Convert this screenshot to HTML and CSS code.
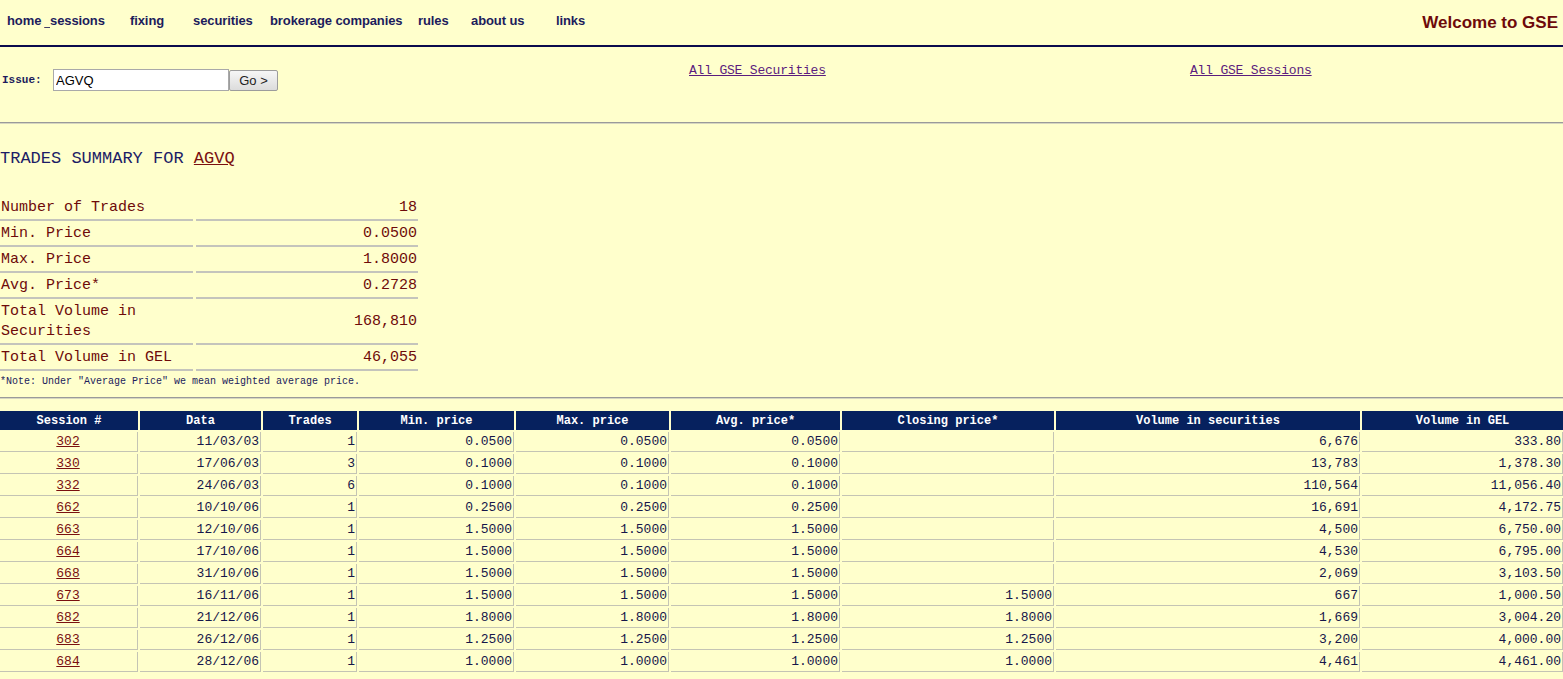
FILE: index.html
```html
<!DOCTYPE html>
<html>
<head>
<meta charset="utf-8">
<title>GSE - Trades summary AGVQ</title>
<link rel="stylesheet" href="styles.css">
</head>
<body>
<header class="topbar">
  <nav class="nav">
    <a class="nav-item" href="#">home<span class="nav-gap">_</span></a>
    <a class="nav-item" href="#">sessions</a>
    <a class="nav-item" href="#">fixing</a>
    <a class="nav-item" href="#">securities</a>
    <a class="nav-item" href="#">brokerage companies</a>
    <a class="nav-item" href="#">rules</a>
    <a class="nav-item" href="#">about us</a>
    <a class="nav-item" href="#">links</a>
  </nav>
  <div class="welcome">Welcome to GSE</div>
</header>

<section class="issue-row">
  <form class="issue-form">
    <label class="issue-label">Issue:</label>
    <input class="issue-input" type="text" value="AGVQ">
    <button class="issue-btn" type="button">Go &gt;</button>
  </form>
  <a class="all-link" href="#">All GSE Securities</a>
  <a class="all-link" href="#">All GSE Sessions</a>
</section>

<hr class="rule rule-top">

<h1 class="title">TRADES SUMMARY FOR <a class="title-link" href="#">AGVQ</a></h1>

<div class="summary">
  <div class="s-label">Number of Trades</div><div class="s-val">18</div>
  <div class="s-label">Min. Price</div><div class="s-val">0.0500</div>
  <div class="s-label">Max. Price</div><div class="s-val">1.8000</div>
  <div class="s-label">Avg. Price*</div><div class="s-val">0.2728</div>
  <div class="s-label">Total Volume in Securities</div><div class="s-val">168,810</div>
  <div class="s-label">Total Volume in GEL</div><div class="s-val">46,055</div>
</div>
<p class="note">*Note: Under "Average Price" we mean weighted average price.</p>

<hr class="rule rule-mid">

<table class="trades">
  <colgroup>
    <col class="c1"><col class="c2"><col class="c3"><col class="c4"><col class="c5"><col class="c6"><col class="c7"><col class="c8"><col class="c9">
  </colgroup>
  <thead>
    <tr><th>Session #</th><th>Data</th><th>Trades</th><th>Min. price</th><th>Max. price</th><th>Avg. price*</th><th>Closing price*</th><th>Volume in securities</th><th>Volume in GEL</th></tr>
  </thead>
  <tbody>
    <tr><td class="sess"><a href="#">302</a></td><td>11/03/03</td><td>1</td><td>0.0500</td><td>0.0500</td><td>0.0500</td><td></td><td>6,676</td><td>333.80</td></tr>
    <tr><td class="sess"><a href="#">330</a></td><td>17/06/03</td><td>3</td><td>0.1000</td><td>0.1000</td><td>0.1000</td><td></td><td>13,783</td><td>1,378.30</td></tr>
    <tr><td class="sess"><a href="#">332</a></td><td>24/06/03</td><td>6</td><td>0.1000</td><td>0.1000</td><td>0.1000</td><td></td><td>110,564</td><td>11,056.40</td></tr>
    <tr><td class="sess"><a href="#">662</a></td><td>10/10/06</td><td>1</td><td>0.2500</td><td>0.2500</td><td>0.2500</td><td></td><td>16,691</td><td>4,172.75</td></tr>
    <tr><td class="sess"><a href="#">663</a></td><td>12/10/06</td><td>1</td><td>1.5000</td><td>1.5000</td><td>1.5000</td><td></td><td>4,500</td><td>6,750.00</td></tr>
    <tr><td class="sess"><a href="#">664</a></td><td>17/10/06</td><td>1</td><td>1.5000</td><td>1.5000</td><td>1.5000</td><td></td><td>4,530</td><td>6,795.00</td></tr>
    <tr><td class="sess"><a href="#">668</a></td><td>31/10/06</td><td>1</td><td>1.5000</td><td>1.5000</td><td>1.5000</td><td></td><td>2,069</td><td>3,103.50</td></tr>
    <tr><td class="sess"><a href="#">673</a></td><td>16/11/06</td><td>1</td><td>1.5000</td><td>1.5000</td><td>1.5000</td><td>1.5000</td><td>667</td><td>1,000.50</td></tr>
    <tr><td class="sess"><a href="#">682</a></td><td>21/12/06</td><td>1</td><td>1.8000</td><td>1.8000</td><td>1.8000</td><td>1.8000</td><td>1,669</td><td>3,004.20</td></tr>
    <tr><td class="sess"><a href="#">683</a></td><td>26/12/06</td><td>1</td><td>1.2500</td><td>1.2500</td><td>1.2500</td><td>1.2500</td><td>3,200</td><td>4,000.00</td></tr>
    <tr><td class="sess"><a href="#">684</a></td><td>28/12/06</td><td>1</td><td>1.0000</td><td>1.0000</td><td>1.0000</td><td>1.0000</td><td>4,461</td><td>4,461.00</td></tr>
  </tbody>
</table>
</body>
</html>
```

FILE: styles.css
```css
html, body {
  margin: 0;
  padding: 0;
  background: #ffffcc;
}

body {
  font-family: "Liberation Mono", "DejaVu Sans Mono", monospace;
  color: #1a1a4e;
  overflow: hidden;
}

/* ---------- top bar ---------- */
.topbar {
  display: flex;
  align-items: center;
  justify-content: space-between;
  height: 45px;
  border-bottom: 2px solid #0b0b4d;
  padding: 0 5px 0 7px;
  box-sizing: content-box;
}

.nav {
  display: grid;
  grid-template-columns: 43px 80px 63px 77px 148px 53px 85px auto;
  font-family: "Liberation Sans", Arial, sans-serif;
  font-weight: bold;
  font-size: 13px;
  padding-bottom: 4px;
  letter-spacing: -0.1px;
}

.nav-item {
  color: #1c1c5c;
  text-decoration: none;
  white-space: nowrap;
}

.nav-gap {
  margin-left: 3px;
  font-weight: normal;
  display: inline-block;
  width: 6px;
  overflow: hidden;
  vertical-align: bottom;
}

.welcome {
  font-family: "Liberation Sans", Arial, sans-serif;
  font-weight: bold;
  font-size: 17px;
  color: #6e0a0a;
}

/* ---------- issue row ---------- */
.issue-row {
  display: grid;
  grid-template-columns: 689px 501px auto;
  align-items: start;
  padding-top: 14px;
  height: 61px;
}

.issue-form {
  display: flex;
  align-items: center;
  margin: 8px 0 0 2px;
}

.issue-label {
  font-family: "Liberation Mono", monospace;
  font-weight: bold;
  font-size: 11px;
  color: #1c1c5c;
  width: 51px;
}

.issue-input {
  width: 176px;
  height: 22px;
  box-sizing: border-box;
  border: 1px solid #a9a9a9;
  background: #ffffff;
  font-family: "Liberation Sans", Arial, sans-serif;
  font-size: 13px;
  padding: 0 2px;
  margin: 0;
  color: #000;
}

.issue-btn {
  width: 49px;
  height: 21px;
  box-sizing: border-box;
  border: 1px solid #9c9c9c;
  border-radius: 2px;
  background: linear-gradient(#f6f6f6, #dcdcdc);
  font-family: "Liberation Sans", Arial, sans-serif;
  font-size: 13px;
  color: #222;
  padding: 0;
  margin: 0;
}

.all-link {
  font-family: "Liberation Mono", monospace;
  font-size: 13px;
  line-height: 16px;
  margin-top: 2px;
  letter-spacing: -0.2px;
  color: #5b1c7e;
  text-decoration: underline;
  justify-self: start;
}

/* ---------- rules ---------- */
.rule {
  border: 0;
  border-top: 1px solid #9a9a9a;
  border-bottom: 1px solid #d6d6c0;
  margin: 0;
  height: 0;
}

.rule-mid {
  margin-top: 9px;
}

/* ---------- title ---------- */
.title {
  margin: 25px 0 0 0;
  font-family: "Liberation Mono", monospace;
  font-weight: normal;
  font-size: 17px;
  line-height: 20px;
  color: #1c1c66;
}

.title-link {
  color: #7a1010;
  text-decoration: underline;
}

/* ---------- summary ---------- */
.summary {
  display: grid;
  grid-template-columns: 193px 222px;
  column-gap: 3px;
  row-gap: 2px;
  margin-top: 28px;
  width: 418px;
}

.s-label,
.s-val {
  font-family: "Liberation Mono", monospace;
  font-size: 15px;
  line-height: 20px;
  padding: 1px 0 1px 1px;
  color: #6e0a0a;
  border-bottom: 2px solid #c4c4bc;
  display: flex;
  align-items: center;
}

.s-val {
  justify-content: flex-end;
  padding-right: 1px;
}

.note {
  margin: 5px 0 0 0;
  font-family: "Liberation Mono", monospace;
  font-size: 10px;
  line-height: 12px;
  color: #1c1c5c;
}

/* ---------- trades table ---------- */
.trades {
  border-collapse: separate;
  border-spacing: 2px;
  table-layout: fixed;
  width: calc(100% + 4px);
  margin: 10px -2px 0 -2px;
  font-family: "Liberation Mono", monospace;
}

.c1 { width: 138px; }
.c2 { width: 121px; }
.c3 { width: 94px; }
.c4 { width: 155px; }
.c5 { width: 153px; }
.c6 { width: 169px; }
.c7 { width: 212px; }
.c8 { width: 304px; }
.c9 { width: 201px; }

.trades th {
  background: #06215e;
  color: #ffffff;
  font-size: 12px;
  font-weight: bold;
  height: 19px;
  padding: 0;
  text-align: center;
}

.trades td {
  height: 19px;
  padding: 0 1px 0 0;
  font-size: 13px;
  text-align: right;
  color: #16164a;
  border-right: 1px solid #c4c4b4;
  border-bottom: 1px solid #c4c4b4;
  white-space: nowrap;
}

.trades td.sess {
  text-align: center;
}

.trades td.sess a {
  color: #7a1010;
  text-decoration: underline;
}
```
